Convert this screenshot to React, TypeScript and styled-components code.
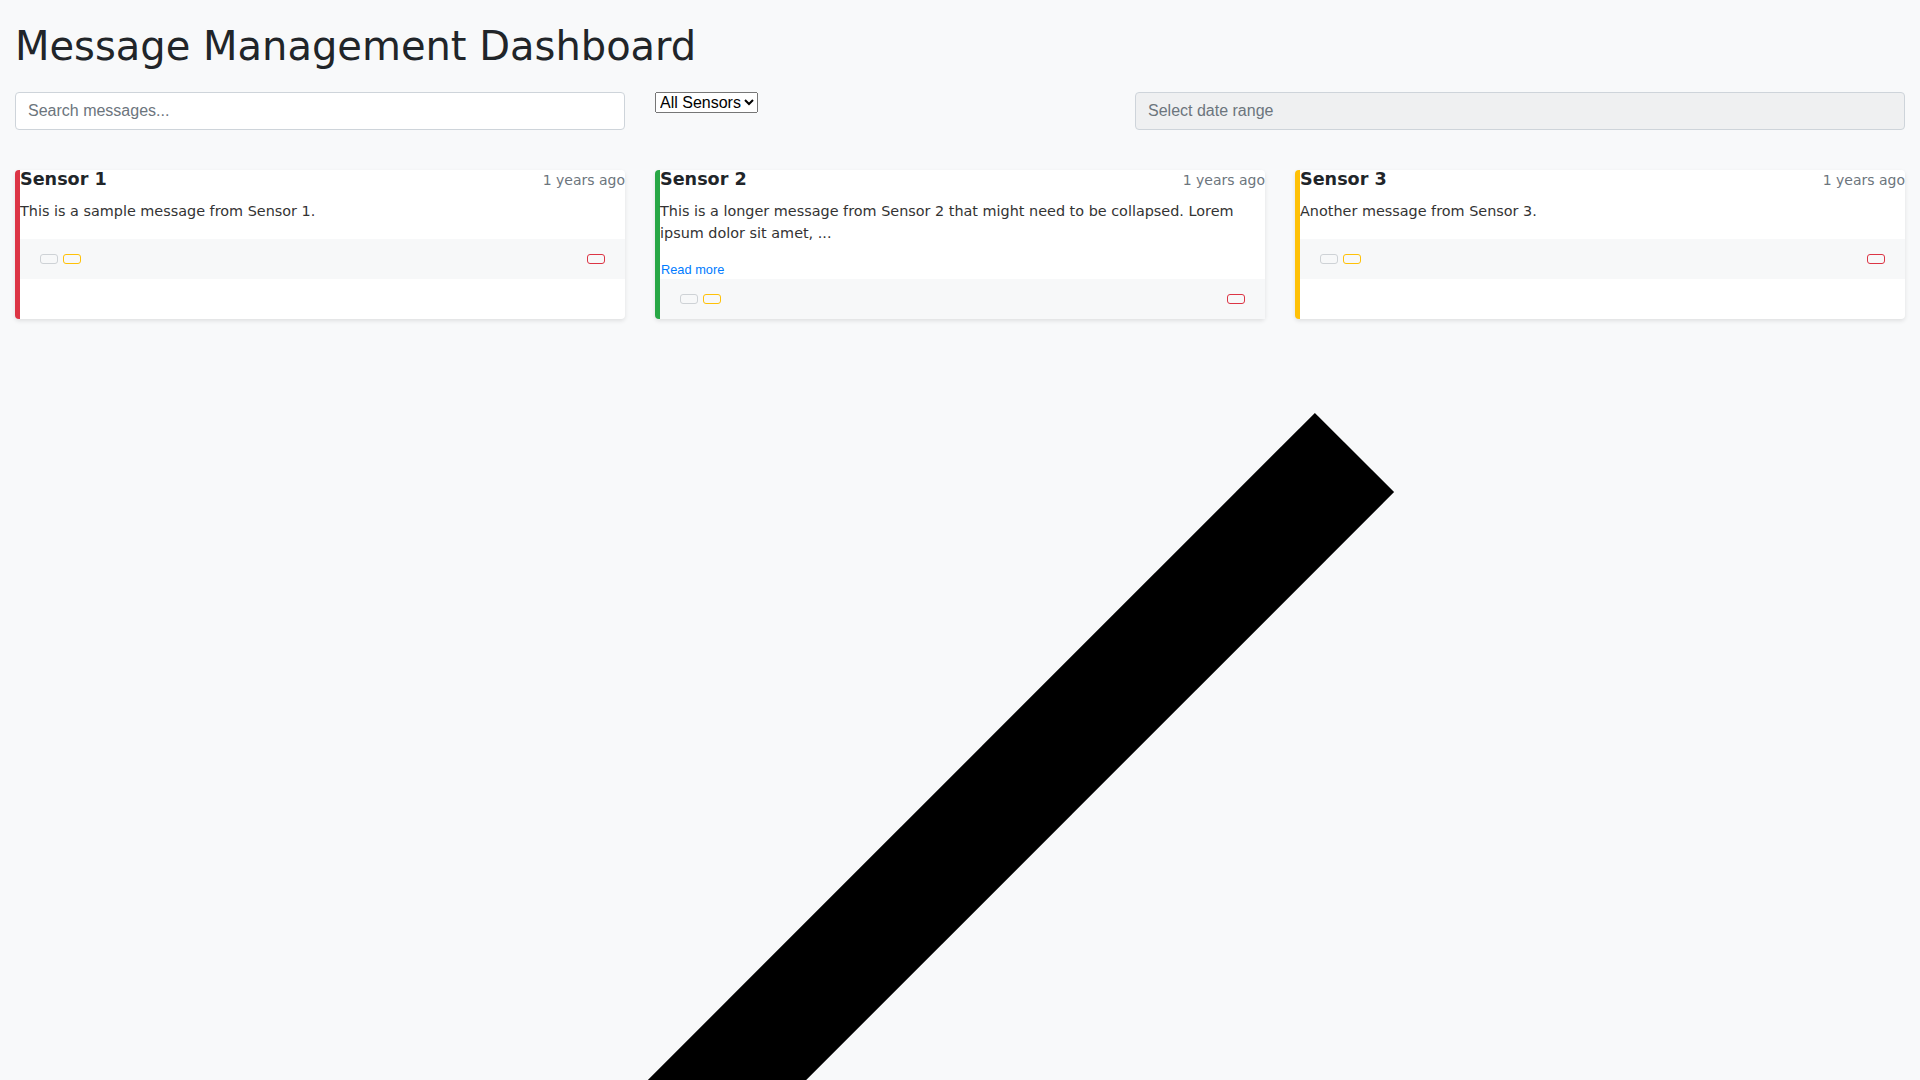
import React from 'react';
import styled, { createGlobalStyle } from 'styled-components';

const GlobalStyle = createGlobalStyle`
  body {
    margin: 0;
    background-color: #f8f9fa;
    color: #212529;
    font-family: "DejaVu Sans", sans-serif;
  }
`;

interface Message {
  id: number;
  sensor: string;
  text: string;
  time: string;
  color: string;
  truncated?: boolean;
}

const messages: Message[] = [
  {
    id: 1,
    sensor: 'Sensor 1',
    text: 'This is a sample message from Sensor 1.',
    time: '1 years ago',
    color: '#dc3545',
  },
  {
    id: 2,
    sensor: 'Sensor 2',
    text: 'This is a longer message from Sensor 2 that might need to be collapsed. Lorem ipsum dolor sit amet, ...',
    time: '1 years ago',
    color: '#28a745',
    truncated: true,
  },
  {
    id: 3,
    sensor: 'Sensor 3',
    text: 'Another message from Sensor 3.',
    time: '1 years ago',
    color: '#ffc107',
  },
];

const App = () => {
  return (
    <Page>
      <GlobalStyle />
      <Title>Message Management Dashboard</Title>
      <Filters>
        <TextInput type="text" placeholder="Search messages..." />
        <div>
          <SensorSelect defaultValue="all">
            <option value="all">All Sensors</option>
            <option value="1">Sensor 1</option>
            <option value="2">Sensor 2</option>
            <option value="3">Sensor 3</option>
          </SensorSelect>
        </div>
        <TextInput type="text" placeholder="Select date range" readOnly $muted />
      </Filters>
      <CardGrid>
        {messages.map((m) => (
          <MessageCard key={m.id} message={m} />
        ))}
      </CardGrid>
      {/* oversized icon left without size styles */}
      <Slash viewBox="0 0 1890 761" width="1890" height="761">
        <line x1="1339.5" y1="133.5" x2="439.5" y2="1033.5" stroke="#000" strokeWidth="112" />
      </Slash>
    </Page>
  );
};

export default App;

const MessageCard = ({ message }: { message: Message }) => {
  return (
    <Card $color={message.color}>
      <CardHeader>
        <SensorName>{message.sensor}</SensorName>
        <TimeAgo>{message.time}</TimeAgo>
      </CardHeader>
      <MessageText>{message.text}</MessageText>
      {message.truncated && <ReadMore type="button">Read more</ReadMore>}
      <CardFooter>
        <ButtonGroup>
          <PillButton type="button" $color="#ced2d6" />
          <PillButton type="button" $color="#ffc107" />
        </ButtonGroup>
        <PillButton type="button" $color="#dc3545" />
      </CardFooter>
    </Card>
  );
};

const Page = styled.div`
  padding: 15px;
  height: 1050px;
  overflow: hidden;
`;

const Title = styled.h1`
  margin: 7px 0 22px;
  font-size: 40px;
  font-weight: 400;
  line-height: 1.2;
  color: #212529;
`;

const Filters = styled.div`
  display: grid;
  grid-template-columns: 610px 450px 1fr;
  column-gap: 30px;
  align-items: start;
  margin-bottom: 40px;
`;

const TextInput = styled.input<{ $muted?: boolean }>`
  box-sizing: border-box;
  width: 100%;
  height: 38px;
  padding: 6px 12px;
  font-family: "Liberation Sans", Arial, sans-serif;
  font-size: 16px;
  line-height: 1.5;
  color: #495057;
  background-color: ${(p) => (p.$muted ? '#eff0f1' : '#fff')};
  border: 1px solid #ced4da;
  border-radius: 4px;
  outline: none;

  &::placeholder {
    color: #6c757d;
  }
`;

const SensorSelect = styled.select`
  font-family: "Liberation Sans", Arial, sans-serif;
  font-size: 16px;
  color: #000;
`;

const CardGrid = styled.div`
  display: grid;
  grid-template-columns: repeat(3, 1fr);
  column-gap: 30px;
`;

const Card = styled.div<{ $color: string }>`
  display: flex;
  flex-direction: column;
  background-color: #fff;
  border-left: 5px solid ${(p) => p.$color};
  border-radius: 4px;
  box-shadow: 0 2px 4px rgba(0, 0, 0, 0.1);
`;

const CardHeader = styled.div`
  display: flex;
  justify-content: space-between;
  align-items: baseline;
  margin-bottom: 12px;
`;

const SensorName = styled.h5`
  margin: 0;
  font-size: 17.6px;
  font-weight: 700;
  line-height: 1.1;
  color: #212529;
`;

const TimeAgo = styled.small`
  font-size: 14px;
  line-height: 1;
  color: #6c757d;
`;

const MessageText = styled.p`
  margin: 0 0 16px;
  font-size: 14.4px;
  line-height: 1.5;
  color: #333;
`;

const ReadMore = styled.button`
  align-self: flex-start;
  padding: 1.5px 1px;
  border: none;
  background: none;
  font-family: "Liberation Sans", Arial, sans-serif;
  font-size: 12.8px;
  color: #007bff;
  cursor: pointer;
`;

const CardFooter = styled.div`
  display: flex;
  justify-content: space-between;
  align-items: center;
  padding: 15px 20px;
  background-color: #f7f8f9;
`;

const ButtonGroup = styled.div`
  display: flex;
  gap: 5px;
`;

const PillButton = styled.button<{ $color: string }>`
  box-sizing: border-box;
  width: 18px;
  height: 10px;
  padding: 0;
  background: transparent;
  border: 1px solid ${(p) => p.$color};
  border-radius: 3px;
`;

const Slash = styled.svg`
  display: block;
  overflow: visible;
`;
